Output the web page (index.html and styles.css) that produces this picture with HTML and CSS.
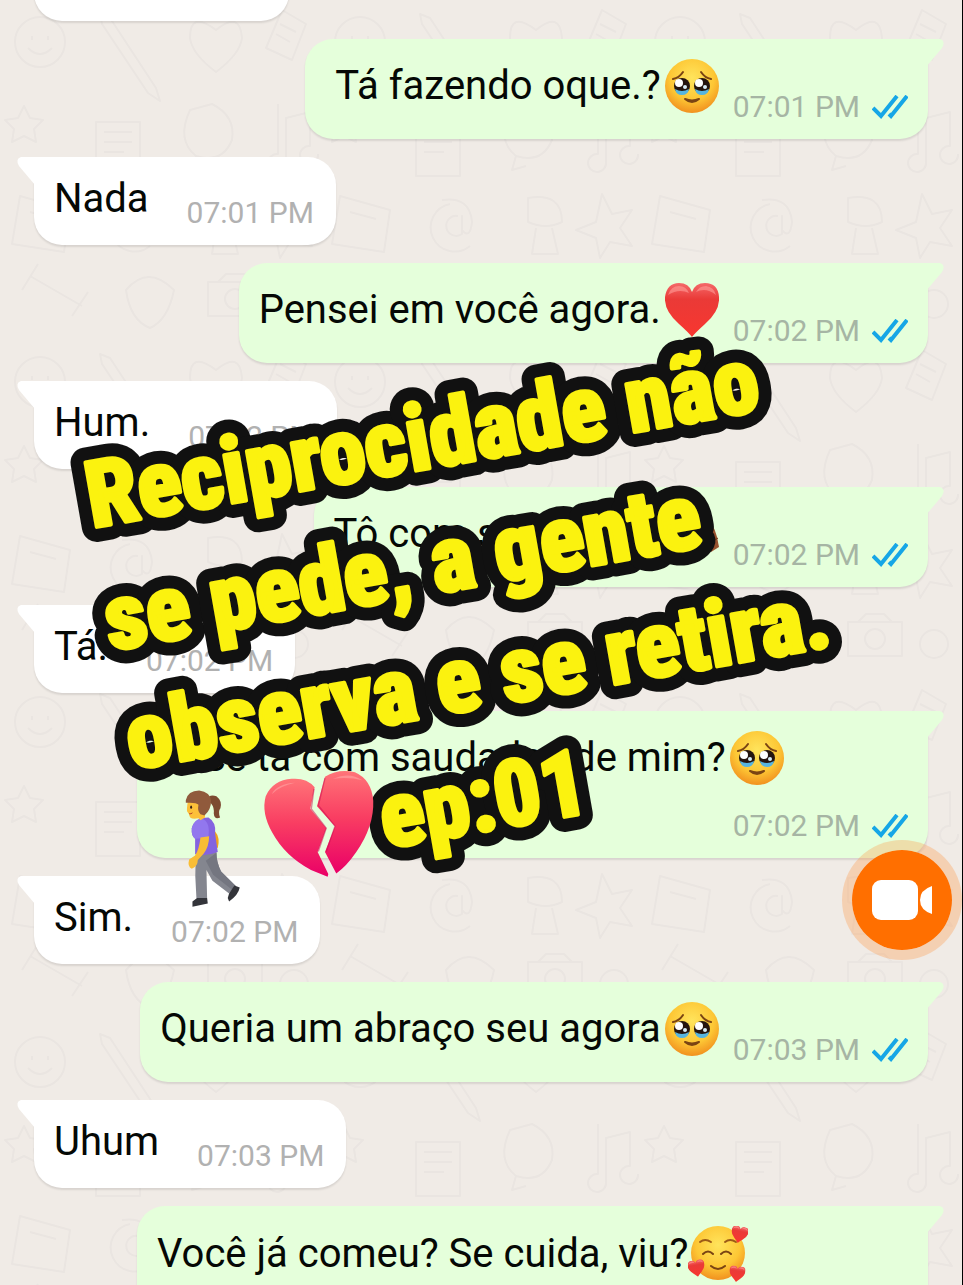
FILE: index.html
```html
<!DOCTYPE html>
<html lang="pt-BR">
<head>
	<meta charset="utf-8">
	<meta name="viewport" content="width=device-width, initial-scale=1">
	<title>Reciprocidade ep:01</title>
	<link rel="stylesheet" href="styles.css">
</head>
<body>

	<!-- shared drawings -->
	<svg class="sprites" aria-hidden="true">
		<defs>
			<radialGradient id="face" cx="50%" cy="35%" r="68%">
				<stop offset="0" stop-color="#ffe45c"/>
				<stop offset="0.6" stop-color="#fdc735"/>
				<stop offset="1" stop-color="#f08a1c"/>
			</radialGradient>
			<linearGradient id="red" x1="0" y1="0" x2="0" y2="1">
				<stop offset="0" stop-color="#f4696a"/>
				<stop offset="0.3" stop-color="#ea3a37"/>
				<stop offset="1" stop-color="#f8362f"/>
			</linearGradient>
			<linearGradient id="pink" x1="0" y1="0" x2="0" y2="1">
				<stop offset="0" stop-color="#ff7478"/>
				<stop offset="0.45" stop-color="#f93e62"/>
				<stop offset="1" stop-color="#ea0067"/>
			</linearGradient>

			<symbol id="ticks" viewBox="0 0 36 24">
				<path d="M1 13L9 21L25 1M17 19L19 21L35 1" fill="none" stroke="#16a6e6" stroke-width="4"/>
			</symbol>

			<symbol id="tears" viewBox="0 0 54 54">
				<circle cx="27" cy="27" r="27" fill="url(#face)"/>
				<path d="M8 20Q14 19 18 13M36 13Q40 19 46 20" fill="none" stroke="#7a4413" stroke-width="2" stroke-linecap="round"/>
				<circle cx="17" cy="27" r="8" fill="#25150f"/>
				<circle cx="37" cy="27" r="8" fill="#25150f"/>
				<path d="M10 30Q17 34 24 30Q23 36 17 36Q11 36 10 30ZM30 30Q37 34 44 30Q43 36 37 36Q31 36 30 30Z" fill="#57b5df"/>
				<circle cx="14" cy="24" r="4" fill="#fff"/>
				<circle cx="34" cy="24" r="4" fill="#fff"/>
				<circle cx="20" cy="28" r="2" fill="#d8eef8"/>
				<circle cx="40" cy="28" r="2" fill="#d8eef8"/>
				<path d="M20 40Q27 46 34 40Q27 43 20 40Z" fill="#7a4413" stroke="#7a4413" stroke-width="2" stroke-linejoin="round"/>
			</symbol>

			<symbol id="heart" viewBox="0 0 54 54">
				<path d="M27 54Q24 50 14 41Q-1 28 0 14Q2 0 14 0Q24 0 27 9Q30 0 40 0Q53 0 54 14Q55 28 40 41Q30 50 27 54Z" fill="url(#red)"/>
				<path d="M3 12Q6 3 14 3Q21 3 24 10Q14 5 3 12ZM31 9Q34 3 41 3Q49 4 51 12Q41 4 31 9Z" fill="#ff9c98" opacity="0.6"/>
			</symbol>

			<symbol id="loved" viewBox="0 0 60 56">
				<circle cx="30" cy="27" r="27" fill="url(#face)"/>
				<path d="M12 16Q17 12 23 16M37 16Q42 12 48 16" fill="none" stroke="#9c5a16" stroke-width="2" stroke-linecap="round"/>
				<path d="M15 28Q20 23 25 28M33 28Q38 23 43 28M23 40Q30 46 37 40" fill="none" stroke="#7a4413" stroke-width="2" stroke-linecap="round"/>
				<use href="#heart" x="43" y="0" width="17" height="17" transform="rotate(12 51 8)"/>
				<use href="#heart" x="0" y="34" width="17" height="17" transform="rotate(-10 8 42)"/>
				<use href="#heart" x="41" y="40" width="16" height="16" transform="rotate(8 49 48)"/>
			</symbol>

			<symbol id="palm" viewBox="0 0 54 54">
				<circle cx="26" cy="22" r="14" fill="#98532f"/>
				<path d="M36 6Q48 14 52 30L54 40L46 45L38 30Z" fill="#98532f"/>
				<path d="M45 34Q50 34 53 31" fill="none" stroke="#6e3618" stroke-width="1"/>
			</symbol>

			<pattern id="doodles" width="320" height="340" patternUnits="userSpaceOnUse">
				<g fill="none" stroke="#eae5e1" stroke-width="2" stroke-linejoin="round">
					<circle cx="40" cy="42" r="25"/>
					<path d="M32 36v4M48 36v4M28 48Q40 60 52 48"/>
					<path d="M100 14l10 4L156 88l4 13l-12-8L102 24Z"/>
					<path d="M216 30Q190 10 190 38Q192 54 216 72Q240 54 242 38Q240 10 216 30Z"/>
					<path d="M282 10l24 14l-14 36l-26-12ZM280 24l16 8M276 34l14 8"/>
					<path d="M24 106l6 12l13 2l-9 9l2 13l-12-6l-12 6l2-13l-9-9l13-2Z"/>
					<path d="M96 122h44v54h-44ZM104 132h28M104 142h28M104 152h20"/>
					<path d="M190 110Q176 140 196 156Q222 164 232 140Q236 116 212 104ZM196 156l-4 14l14-4"/>
					<path d="M278 104v50a9 9 0 1 0 8 8v-44l24-6v34a9 9 0 1 0 8 8"/>
					<path d="M20 196l50 14l-6 42l-52-8ZM30 212l26 7"/>
					<path d="M130 204a24 24 0 1 0 20 42M138 216a10 10 0 1 0 4 18v-18v14q8 10 10-8q-2-26-30-22"/>
					<path d="M208 198q34-6 34 24q-16 8-34 0ZM216 228l-4 26h26l-6-26M282 194l10 20l20-4l-12 18l12 18l-22-4l-10 16l-4-20l-20-8l20-8Z"/>
					<path d="M30 276l52 30M22 290l16-26M72 316l16-24M126 290q22-26 48 0q-6 30-24 38q-20-8-24-38ZM208 282h54v34h-54ZM218 282l8-8h18l8 8"/>
					<circle cx="235" cy="299" r="10"/>
					<circle cx="294" cy="304" r="14"/>
				</g>
			</pattern>
		</defs>
	</svg>

	<svg class="wallpaper" aria-hidden="true"><rect width="100%" height="100%" fill="url(#doodles)"/></svg>

	<main class="chat">
		<div class="msg in">
			<p>Oi.</p>
			<div class="meta">07:01 PM</div>
		</div>
		<div class="msg out roomy">
			<p>Tá fazendo oque.?<svg class="emoji"><use href="#tears"/></svg></p>
			<div class="meta">07:01 PM<svg class="ticks"><use href="#ticks"/></svg></div>
		</div>
		<div class="msg in">
			<p>Nada</p>
			<div class="meta">07:01 PM</div>
		</div>
		<div class="msg out">
			<p>Pensei em você agora.<svg class="emoji"><use href="#heart"/></svg></p>
			<div class="meta">07:02 PM<svg class="ticks"><use href="#ticks"/></svg></div>
		</div>
		<div class="msg in">
			<p>Hum.</p>
			<div class="meta">07:02 PM</div>
		</div>
		<div class="msg out">
			<p>Tô com saudades.<svg class="emoji"><use href="#palm"/></svg></p>
			<div class="meta">07:02 PM<svg class="ticks"><use href="#ticks"/></svg></div>
		</div>
		<div class="msg in">
			<p>Tá.</p>
			<div class="meta">07:02 PM</div>
		</div>
		<div class="msg out">
			<p>Você tá com saudades de mim?<svg class="emoji"><use href="#tears"/></svg></p>
			<div class="meta">07:02 PM<svg class="ticks"><use href="#ticks"/></svg></div>
		</div>
		<div class="msg in">
			<p>Sim.</p>
			<div class="meta">07:02 PM</div>
		</div>
		<div class="msg out">
			<p>Queria um abraço seu agora<svg class="emoji"><use href="#tears"/></svg></p>
			<div class="meta">07:03 PM<svg class="ticks"><use href="#ticks"/></svg></div>
		</div>
		<div class="msg in">
			<p>Uhum</p>
			<div class="meta">07:03 PM</div>
		</div>
		<div class="msg out full">
			<p>Você já comeu? Se cuida, viu?<svg class="emoji loved"><use href="#loved"/></svg></p>
		</div>
	</main>

	<svg class="caption" viewBox="0 340 963 580" role="img" aria-label="Reciprocidade não se pede, a gente observa e se retira. ep:01">
		<use class="outline" href="#title"/>
		<g class="fill">
			<g id="title">
				<text transform="translate(92 528) rotate(-10)">Reciprocidade não</text>
				<text transform="translate(110 651) rotate(-10)">se pede, a gente</text>
				<text transform="translate(132 770) rotate(-10)">observa e se retira.</text>
				<text transform="translate(386 849) rotate(-10)">ep:01</text>
			</g>
		</g>

		<!-- woman walking -->
		<g transform="translate(100 660) scale(0.3333)">
			<path d="M322 424Q326 402 350 410Q368 424 362 446Q354 456 361 474Q344 482 342 462Q344 444 334 432Z" fill="#7d4a31"/>
			<path d="M346 516Q362 534 354 566L340 560L342 520Z" fill="#f2a31d"/>
			<path d="M288 580L350 578Q350 610 364 636L408 680L388 702L338 664L320 632L322 716L290 718Q284 650 288 580Z" fill="#84868f"/>
			<path d="M350 580Q350 610 364 636L408 680L398 692L340 646L318 604Z" fill="#747680"/>
			<path d="M278 726L292 716L322 716L324 732L278 742ZM388 702L404 678L420 684Q416 706 388 726L384 716Z" fill="#33343a"/>
			<path d="M276 506Q284 474 326 474Q350 488 346 522L354 578Q320 592 286 584L286 538Q274 528 276 506Z" fill="#8463e0"/>
			<path d="M276 506Q284 478 306 478Q332 486 326 532Q304 538 286 538Q274 528 276 506Z" fill="#9277ee"/>
			<path d="M302 534L328 530Q328 560 312 582L294 602Q294 622 276 628Q262 622 268 600L286 588Q298 570 302 534Z" fill="#f9bd35"/>
			<path d="M264 426Q260 452 262 456L268 464Q268 478 284 478L296 476L302 482L316 474L312 440L290 424Z" fill="#fcc03a"/>
			<path d="M258 422Q264 394 298 393Q332 398 334 424Q334 452 314 468L302 464Q292 456 296 436Q290 428 258 430Z" fill="#905a3c"/>
			<ellipse cx="274" cy="443" rx="3" ry="5" fill="#3b2417"/>
			<path d="M268 463Q274 464 278 460" fill="none" stroke="#b8452a" stroke-width="3"/>
		</g>

		<!-- broken heart -->
		<g transform="translate(100 660) scale(0.3333)" fill="url(#pink)">
			<path d="M645 383Q620 354 576 358Q520 362 498 410Q484 460 518 520Q556 590 634 632L684 652L686 644L654 578L680 506L632 448Z"/>
			<path d="M676 352Q716 326 766 338Q816 360 821 424Q824 500 770 578Q740 622 710 642L676 578L706 500L652 440Z"/>
			<path d="M643 388L635 448L680 506L656 576M676 356L656 438L706 500L680 576" fill="none" stroke="#c90750" stroke-width="4" opacity="0.5"/>
			<path d="M516 404Q534 372 586 370Q540 380 516 404ZM700 358Q750 336 788 362Q748 352 700 358Z" fill="#ffb0ae" opacity="0.5"/>
		</g>
	</svg>

	<button class="record" type="button" aria-label="Gravar vídeo">
		<svg viewBox="0 0 60 40" width="60" height="40">
			<rect width="46" height="40" rx="9" fill="#fff"/>
			<path d="M60 6V34Q48 30 48 20Q48 10 60 6Z" fill="#fff"/>
		</svg>
	</button>

</body>
</html>
```
FILE: styles.css
```css
* {
	box-sizing: border-box;
}

body {
	position: relative;
	height: 100vh;
	margin: 0;
	overflow: hidden;
	background-color: #f0ebe6;
	border-right: 1px solid #000;
	font-family: Roboto, Arial, sans-serif;
	color: #050805;
}

.sprites {
	position: absolute;
	width: 0;
	height: 0;
}

.wallpaper {
	position: absolute;
	width: 100%;
	height: 100%;
}

/* the list is scrolled, so the first bubble is cut off */
.chat {
	position: relative;
	display: flex;
	flex-direction: column;
	gap: 18px;
	margin-top: -67px;
	padding: 0 34px;
}

.msg {
	position: relative;
	display: flex;
	flex-wrap: wrap;
	flex-shrink: 0;
	column-gap: 14px;
	row-gap: 25px;
	max-width: calc(100% - 103px);
	border-radius: 28px;
	box-shadow: 0 2px 2px rgba(0, 0, 0, 0.1);
}

.msg p {
	display: flex;
	align-items: center;
	align-self: flex-start;
	margin: 0;
	font-size: 40px;
	line-height: 48px;
	white-space: nowrap;
}

.msg::before {
	content: "";
	position: absolute;
	top: 0;
	width: 18px;
	height: 28px;
	background-color: inherit;
	clip-path: path("M4 0H18V28L2 9Q-2 2 4 0Z");
}

.in {
	align-self: flex-start;
	column-gap: 38px;
	min-height: 88px;
	padding: 18px 22px 16px 20px;
	background-color: #fff;
	border-top-left-radius: 0;
}

.in::before {
	left: -17px;
}

.out {
	align-self: flex-end;
	min-height: 100px;
	padding: 20px 20px 16px;
	background-color: #e5ffdb;
	border-top-right-radius: 0;
}

.out::before {
	right: -16px;
	transform: scaleX(-1);
}

.roomy {
	padding-left: 30px;
}

.full {
	width: 100%;
	min-height: 147px;
}

.meta {
	display: flex;
	align-items: center;
	align-self: flex-end;
	margin-left: auto;
	font-size: 30px;
	line-height: 32px;
	color: #b1b1b1;
}

.out .meta {
	color: #a6b5a4;
}

.emoji {
	width: 54px;
	height: 54px;
	margin-left: 4px;
}

.loved {
	width: 60px;
	height: 56px;
	margin-left: 0;
}

.ticks {
	width: 36px;
	height: 24px;
	margin-left: 12px;
}

.caption {
	position: absolute;
	top: 340px;
	left: 0;
	width: 100%;
	overflow: visible;
	font-family: "Roboto Condensed", "Liberation Sans Narrow", Arial, sans-serif;
	font-size: 92px;
	font-weight: 800;
	stroke-linejoin: round;
}

.caption .outline {
	fill: #111;
	stroke: #111;
	stroke-width: 30px;
}

.caption .fill {
	fill: #fbf20f;
	stroke: #fbf20f;
	stroke-width: 4px;
}

.record {
	position: absolute;
	top: 840px;
	right: 0;
	display: flex;
	align-items: center;
	justify-content: center;
	width: 120px;
	height: 120px;
	padding: 0;
	border: 10px solid rgba(255, 145, 60, 0.3);
	border-radius: 50%;
	background-color: #ff6f00;
	background-clip: padding-box;
}
```
